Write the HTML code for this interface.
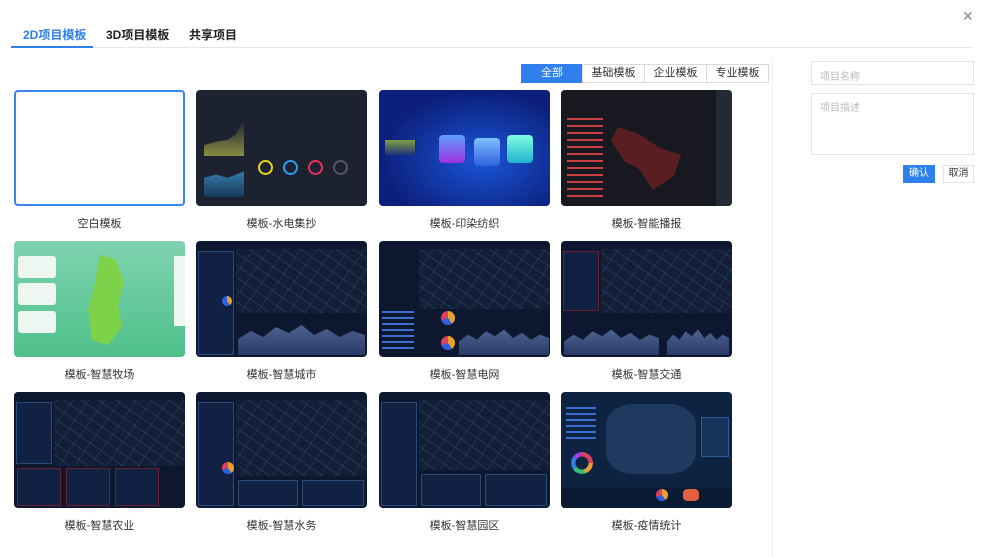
<!DOCTYPE html>
<html><head><meta charset="utf-8"><style>
*{box-sizing:border-box;margin:0;padding:0}
body{width:982px;height:557px;background:#fff;font-family:"Liberation Sans","Noto Sans CJK SC",sans-serif;position:relative;overflow:hidden;color:#333}
.abs{position:absolute}
.tab{position:absolute;top:26px;font-size:12px;font-weight:bold;color:#222}
.fb{position:absolute;top:64px;height:19px;border:1px solid #d9d9d9;font-size:11px;text-align:center;line-height:17px;color:#333;background:#fff}
.card{position:absolute;width:171px;height:116px;border-radius:4px;overflow:hidden}
.lbl{position:absolute;width:171px;text-align:center;font-size:11px;color:#333}
.dash{background:#0d1830}
.dash .p{position:absolute;border:1px solid #2a4a7a;background:rgba(20,40,80,.6)}
.map{position:absolute;background:
repeating-linear-gradient(35deg,transparent 0 9px,rgba(80,120,170,.25) 9px 10px),
repeating-linear-gradient(-55deg,transparent 0 12px,rgba(80,120,170,.2) 12px 13px),#121f36}
.wave{position:absolute;background:linear-gradient(#5a6fa0,#2a3a66);clip-path:polygon(0 100%,0 60%,10% 40%,20% 55%,30% 30%,40% 45%,50% 25%,60% 50%,70% 35%,80% 55%,90% 40%,100% 50%,100% 100%)}
.bars{position:absolute;background:repeating-linear-gradient(#3d6fd0 0 2px,transparent 2px 6px)}
</style></head><body>

<div class="abs" style="left:962px;top:8px;font-size:14px;color:#888">✕</div>
<div class="tab" style="left:23px;color:#2f80ed">2D项目模板</div>
<div class="tab" style="left:106px">3D项目模板</div>
<div class="tab" style="left:189px">共享项目</div>
<div class="abs" style="left:11px;top:47px;width:962px;height:1px;background:#e6e6e6"></div>
<div class="abs" style="left:11px;top:46px;width:82px;height:2px;background:#2f80ed"></div>

<div class="fb" style="left:521px;width:62px;background:#2f80ed;border-color:#2f80ed;color:#fff">全部</div>
<div class="fb" style="left:582px;width:63px">基础模板</div>
<div class="fb" style="left:644px;width:63px">企业模板</div>
<div class="fb" style="left:706px;width:63px">专业模板</div>

<div class="abs" style="left:772px;top:58px;width:1px;height:499px;background:#eee"></div>

<div class="abs" style="left:811px;top:61px;width:163px;height:24px;border:1px solid #e3e3e3;font-size:10px;color:#bbb;padding:6px 8px">项目名称</div>
<div class="abs" style="left:811px;top:93px;width:163px;height:62px;border:1px solid #e3e3e3;font-size:10px;color:#bbb;padding:5px 8px">项目描述</div>
<div class="abs" style="left:903px;top:165px;width:32px;height:18px;background:#2f80ed;color:#fff;font-size:10px;text-align:center;line-height:18px">确认</div>
<div class="abs" style="left:943px;top:165px;width:31px;height:18px;border:1px solid #e3e3e3;color:#333;font-size:10px;text-align:center;line-height:16px">取消</div>

<!-- row1 -->
<div class="card" style="left:14px;top:90px;border:2px solid #3b86ea;background:#fff"></div>
<div class="lbl" style="left:14px;top:215px">空白模板</div>

<div class="card" style="left:196px;top:90px;background:#1c2230">
 <div class="abs" style="left:8px;top:30px;width:40px;height:36px;background:linear-gradient(transparent,#8a8a40);clip-path:polygon(0 100%,0 70%,30% 60%,60% 55%,80% 40%,100% 0,100% 100%)"></div>
 <div class="abs" style="left:8px;top:75px;width:40px;height:32px;background:linear-gradient(#3a8ac0,#1a3a5a);clip-path:polygon(0 100%,0 40%,30% 30%,60% 40%,100% 20%,100% 100%)"></div>
 <div class="abs" style="left:62px;top:70px;width:15px;height:15px;border-radius:50%;border:2px solid #e8d41a"></div>
 <div class="abs" style="left:87px;top:70px;width:15px;height:15px;border-radius:50%;border:2px solid #2ca0e8"></div>
 <div class="abs" style="left:112px;top:70px;width:15px;height:15px;border-radius:50%;border:2px solid #e8305a"></div>
 <div class="abs" style="left:137px;top:70px;width:15px;height:15px;border-radius:50%;border:2px solid #556"></div>
</div>
<div class="lbl" style="left:196px;top:215px">模板-水电集抄</div>

<div class="card" style="left:379px;top:90px;background:radial-gradient(ellipse at 60% 60%,#1a55d8,#0c1f7a 70%)">
 <div class="abs" style="left:60px;top:45px;width:26px;height:28px;background:linear-gradient(#60a0ff,#a030e0);border-radius:4px"></div>
 <div class="abs" style="left:95px;top:48px;width:26px;height:28px;background:linear-gradient(#80c0ff,#3060e0);border-radius:4px"></div>
 <div class="abs" style="left:128px;top:45px;width:26px;height:28px;background:linear-gradient(#80ffe0,#20b0d0);border-radius:4px"></div>
 <div class="abs" style="left:6px;top:50px;width:30px;height:15px;background:linear-gradient(#80a040,#203080)"></div>
</div>
<div class="lbl" style="left:379px;top:215px">模板-印染纺织</div>

<div class="card" style="left:561px;top:90px;background:#181820">
 <div class="bars" style="left:6px;top:28px;width:36px;height:84px;background:repeating-linear-gradient(#c84040 0 2px,transparent 2px 7px)"></div>
 <div class="abs" style="left:50px;top:30px;width:70px;height:70px;background:#5a1e22;clip-path:polygon(10% 10%,40% 20%,70% 40%,100% 50%,90% 80%,60% 100%,40% 70%,20% 60%,0 30%)"></div>
 <div class="abs" style="left:155px;top:0;width:16px;height:116px;background:#222a36"></div>
</div>
<div class="lbl" style="left:561px;top:215px">模板-智能播报</div>

<!-- row2 -->
<div class="card" style="left:14px;top:241px;background:linear-gradient(#7fd3b0,#4fc08a)">
 <div class="abs" style="left:4px;top:15px;width:38px;height:22px;background:#eef6f2;border-radius:3px"></div>
 <div class="abs" style="left:4px;top:42px;width:38px;height:22px;background:#eef6f2;border-radius:3px"></div>
 <div class="abs" style="left:4px;top:70px;width:38px;height:22px;background:#eef6f2;border-radius:3px"></div>
 <div class="abs" style="left:160px;top:15px;width:11px;height:70px;background:#eef6f2"></div>
 <div class="abs" style="left:70px;top:14px;width:40px;height:90px;background:#7ed24a;clip-path:polygon(40% 0,80% 5%,100% 30%,85% 55%,95% 80%,60% 100%,20% 95%,10% 60%,25% 35%)"></div>
</div>
<div class="lbl" style="left:14px;top:366px">模板-智慧牧场</div>

<div class="card dash" style="left:196px;top:241px"><div class="map" style="left:40px;top:8px;width:131px;height:64px"></div><div class="p" style="left:2px;top:10px;width:36px;height:104px"></div><div class="wave" style="left:42px;top:74px;width:127px;height:40px"></div><div class="abs" style="left:26px;top:55px;width:10px;height:10px;border-radius:50%;background:conic-gradient(#e8a030 0 40%,#3060e0 0)"></div></div>
<div class="lbl" style="left:196px;top:366px">模板-智慧城市</div>

<div class="card dash" style="left:379px;top:241px"><div class="map" style="left:40px;top:8px;width:131px;height:60px"></div><div class="bars" style="left:3px;top:70px;width:32px;height:40px"></div><div class="wave" style="left:80px;top:80px;width:90px;height:34px"></div><div class="abs" style="left:62px;top:70px;width:14px;height:14px;border-radius:50%;background:conic-gradient(#e8a030 0 40%,#3060e0 0 70%,#e04060 0)"></div><div class="abs" style="left:62px;top:95px;width:14px;height:14px;border-radius:50%;background:conic-gradient(#e8a030 0 40%,#3060e0 0 70%,#e04060 0)"></div></div>
<div class="lbl" style="left:379px;top:366px">模板-智慧电网</div>

<div class="card dash" style="left:561px;top:241px"><div class="map" style="left:40px;top:8px;width:131px;height:64px"></div><div class="p" style="left:2px;top:10px;width:36px;height:60px;border-color:#6a2030"></div><div class="wave" style="left:3px;top:80px;width:95px;height:34px"></div><div class="wave" style="left:106px;top:80px;width:62px;height:34px"></div></div>
<div class="lbl" style="left:561px;top:366px">模板-智慧交通</div>

<!-- row3 -->
<div class="card dash" style="left:14px;top:392px"><div class="map" style="left:40px;top:8px;width:131px;height:66px"></div><div class="p" style="left:2px;top:10px;width:36px;height:62px"></div><div class="p" style="left:3px;top:76px;width:44px;height:38px;border-color:#6a2030"></div><div class="p" style="left:52px;top:76px;width:44px;height:38px;border-color:#6a2030"></div><div class="p" style="left:101px;top:76px;width:44px;height:38px;border-color:#6a2030"></div></div>
<div class="lbl" style="left:14px;top:517px">模板-智慧农业</div>

<div class="card dash" style="left:196px;top:392px"><div class="map" style="left:40px;top:8px;width:131px;height:76px"></div><div class="p" style="left:2px;top:10px;width:36px;height:104px"></div><div class="abs" style="left:26px;top:70px;width:12px;height:12px;border-radius:50%;background:conic-gradient(#e8a030 0 40%,#3060e0 0 70%,#e04060 0)"></div><div class="p" style="left:42px;top:88px;width:60px;height:26px"></div><div class="p" style="left:106px;top:88px;width:62px;height:26px"></div></div>
<div class="lbl" style="left:196px;top:517px">模板-智慧水务</div>

<div class="card dash" style="left:379px;top:392px"><div class="map" style="left:40px;top:8px;width:131px;height:70px"></div><div class="p" style="left:2px;top:10px;width:36px;height:104px"></div><div class="p" style="left:42px;top:82px;width:60px;height:32px"></div><div class="p" style="left:106px;top:82px;width:62px;height:32px"></div></div>
<div class="lbl" style="left:379px;top:517px">模板-智慧园区</div>

<div class="card" style="left:561px;top:392px;background:#0e2242">
 <div class="abs" style="left:45px;top:12px;width:90px;height:70px;background:#1e3a5e;border-radius:30%"></div>
 <div class="bars" style="left:5px;top:15px;width:30px;height:36px"></div>
 <div class="abs" style="left:10px;top:60px;width:22px;height:22px;border-radius:50%;background:conic-gradient(#e04060 0 25%,#e8a030 0 45%,#30c070 0 65%,#3080e0 0 85%,#a040e0 0);-webkit-mask:radial-gradient(circle,transparent 6px,#000 7px)"></div>
 <div class="abs" style="left:0;top:96px;width:171px;height:20px;background:#0a1a33"></div>
 <div class="abs" style="left:95px;top:97px;width:12px;height:12px;border-radius:50%;background:conic-gradient(#e8a030 0 40%,#3060e0 0 70%,#e04060 0)"></div>
 <div class="abs" style="left:122px;top:97px;width:16px;height:12px;background:#e06040;border-radius:30%"></div>
 <div class="abs" style="left:140px;top:25px;width:28px;height:40px;background:#16335a;border:1px solid #2a5a9a"></div>
</div>
<div class="lbl" style="left:561px;top:517px">模板-疫情统计</div>

</body></html>
